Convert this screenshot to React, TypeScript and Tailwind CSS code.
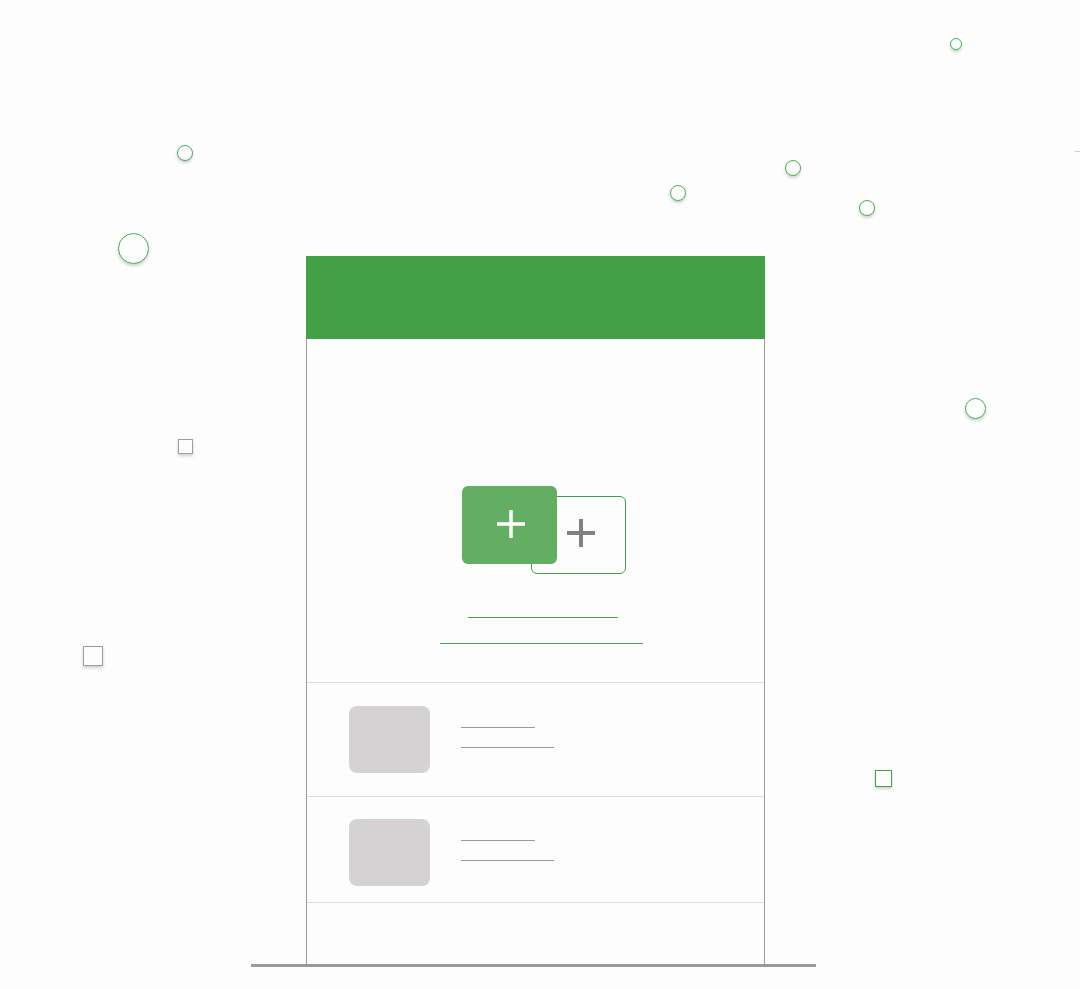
const circles = [
  { left: 177, top: 145, size: 16 },
  { left: 118, top: 233, size: 31 },
  { left: 950, top: 38, size: 12 },
  { left: 670, top: 185, size: 16 },
  { left: 785, top: 160, size: 16 },
  { left: 859, top: 200, size: 16 },
  { left: 965, top: 398, size: 21 },
];

const squares = [
  { left: 178, top: 439, size: 15, color: "#9e9e9e" },
  { left: 83, top: 646, size: 20, color: "#9e9e9e" },
  { left: 875, top: 770, size: 17, color: "#43a047" },
];

function Plus({ color, stroke }: { color: string; stroke: number }) {
  return (
    <svg width="30" height="30" viewBox="0 0 30 30">
      <line x1="15" y1="1" x2="15" y2="29" stroke={color} strokeWidth={stroke} />
      <line x1="1" y1="15" x2="29" y2="15" stroke={color} strokeWidth={stroke} />
    </svg>
  );
}

function Row({ top, height }: { top: number; height: number }) {
  return (
    <div className="flex border-b border-[#dcdcdc]" style={{ height, paddingTop: top }}>
      <div className="ml-[42px] h-[67px] w-[81px] rounded-lg bg-[#d4d2d3]" />
      <div className="ml-[31px] flex flex-col">
        <div className="mt-[21px] h-px w-[74px] bg-[#9a9a9a]" />
        <div className="mt-[19px] h-px w-[93px] bg-[#9a9a9a]" />
      </div>
    </div>
  );
}

export default function App() {
  return (
    <div className="relative h-[989px] w-[1080px] overflow-hidden bg-[#fdfdfd] pt-[256px]">
      {circles.map((c, i) => (
        <div
          key={i}
          className="absolute rounded-full border-[1.5px] border-[#4caf50] bg-[#fdfdfd] shadow-[0_2px_3px_rgba(0,0,0,0.18)]"
          style={{ left: c.left, top: c.top, width: c.size, height: c.size }}
        />
      ))}
      {squares.map((s, i) => (
        <div
          key={i}
          className="absolute border-[1.5px] bg-[#fdfdfd] shadow-[0_2px_3px_rgba(0,0,0,0.18)]"
          style={{ left: s.left, top: s.top, width: s.size, height: s.size, borderColor: s.color }}
        />
      ))}
      <div className="absolute left-[1075px] top-[151px] h-px w-[6px] bg-[#c8c8c8]" />

      <div className="ml-[306px] w-[459px]">
        <div className="h-[83px] bg-[#43a047]" />
        <div className="border-x border-[#9a9a9a]">
          <div className="flex h-[344px] flex-col border-b border-[#dcdcdc] pt-[147px]">
            <div className="relative ml-[155px] h-[88px] w-[164px]">
              <div className="absolute left-[69px] top-[10px] flex h-[78px] w-[95px] rounded-md border border-[#43a047] bg-[#fdfdfd]">
                <div className="ml-[34px] mt-[21px]">
                  <Plus color="#808080" stroke={4} />
                </div>
              </div>
              <div className="absolute left-0 top-0 flex h-[78px] w-[95px] rounded-md bg-[#63ae63]">
                <div className="ml-[34px] mt-[23px]">
                  <Plus color="#ffffff" stroke={3.5} />
                </div>
              </div>
            </div>
            <div className="ml-[161px] mt-[43px] h-px w-[150px] bg-[#4e9a4e]" />
            <div className="ml-[133px] mt-[25px] h-px w-[203px] bg-[#4e9a4e]" />
          </div>
          <Row top={23} height={114} />
          <Row top={22} height={106} />
          <div className="h-[61px]" />
        </div>
      </div>
      <div className="ml-[251px] h-[3px] w-[565px] bg-[#9a9a9a]" />
    </div>
  );
}
